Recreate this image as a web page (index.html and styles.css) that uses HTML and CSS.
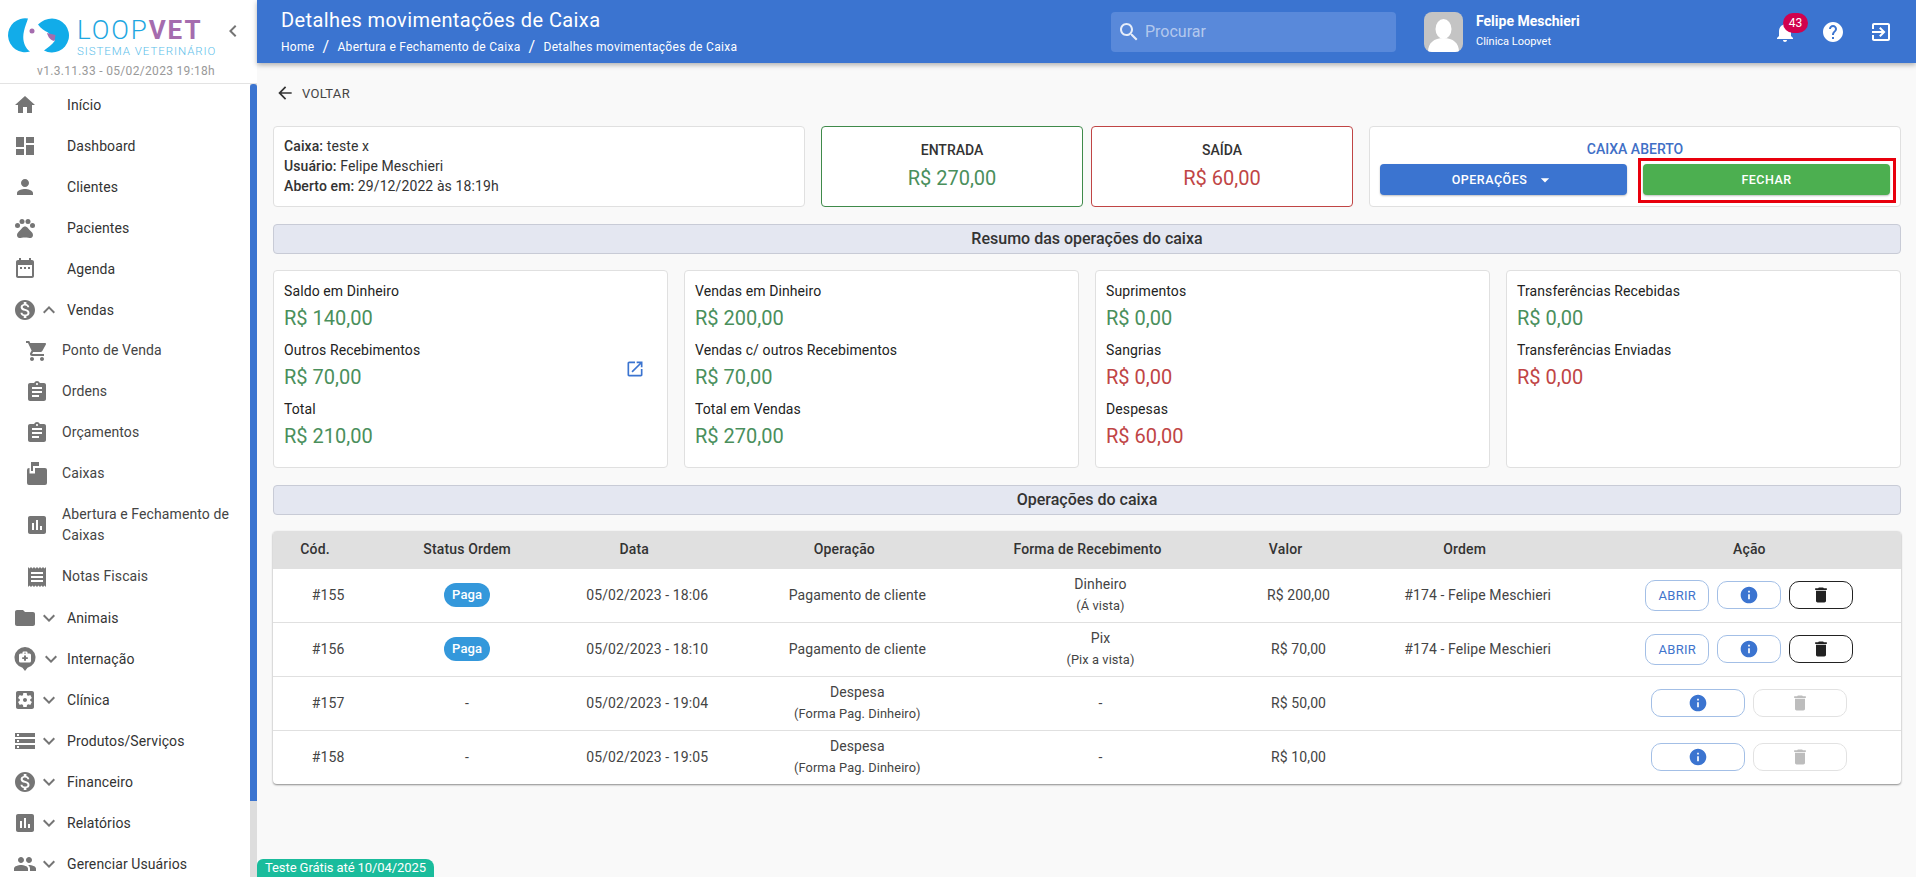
FILE: index.html
```html
<!DOCTYPE html>
<html lang="pt-BR">
<head>
  <meta charset="utf-8">
  <title>Detalhes movimentações de Caixa</title>
  <link rel="stylesheet" href="styles.css">
</head>
<body>
  <!-- icon sprite -->
  <svg class="sprite" aria-hidden="true">
    <symbol id="i-home" viewBox="0 0 24 24"><path d="M10 20v-6h4v6h5v-8h3L12 3 2 12h3v8z"/></symbol>
    <symbol id="i-dashboard" viewBox="0 0 24 24"><path d="M3 13h8V3H3v10zm0 8h8v-6H3v6zm10 0h8V11h-8v10zm0-18v6h8V3h-8z"/></symbol>
    <symbol id="i-person" viewBox="0 0 24 24"><path d="M12 12c2.21 0 4-1.79 4-4s-1.79-4-4-4-4 1.79-4 4 1.79 4 4 4zm0 2c-2.67 0-8 1.34-8 4v2h16v-2c0-2.66-5.33-4-8-4z"/></symbol>
    <symbol id="i-pets" viewBox="0 0 24 24"><circle cx="4.5" cy="9.5" r="2.5"/><circle cx="9" cy="5.5" r="2.5"/><circle cx="15" cy="5.5" r="2.5"/><circle cx="19.5" cy="9.5" r="2.5"/><path d="M17.34 14.86c-.87-1.02-1.6-1.89-2.48-2.91-.46-.54-1.05-1.08-1.75-1.32-.11-.04-.22-.07-.33-.09-.25-.04-.52-.04-.78-.04s-.53 0-.79.05c-.11.02-.22.05-.33.09-.7.24-1.28.78-1.75 1.32-.87 1.02-1.6 1.89-2.48 2.91-1.31 1.31-2.92 2.76-2.62 4.79.29 1.02 1.02 2.03 2.33 2.32.73.15 3.06-.44 5.54-.44h.18c2.48 0 4.81.58 5.54.44 1.31-.29 2.04-1.31 2.33-2.32.31-2.04-1.3-3.49-2.61-4.8z"/></symbol>
    <symbol id="i-event" viewBox="0 0 24 24"><path d="M19 3h-1V1h-2v2H8V1H6v2H5c-1.11 0-1.99.9-1.99 2L3 19c0 1.1.89 2 2 2h14c1.1 0 2-.9 2-2V5c0-1.1-.9-2-2-2zm0 16H5V8h14v11zM7 10h2v2H7zm4 0h2v2h-2zm4 0h2v2h-2z"/></symbol>
    <symbol id="i-money" viewBox="0 0 24 24"><path d="M12 2C6.48 2 2 6.48 2 12s4.48 10 10 10 10-4.48 10-10S17.52 2 12 2zm1.41 16.09V20h-2.67v-1.93c-1.71-.36-3.16-1.46-3.27-3.4h1.96c.1 1.05.82 1.87 2.65 1.87 1.96 0 2.4-.98 2.4-1.59 0-.83-.44-1.61-2.67-2.14-2.48-.6-4.18-1.62-4.18-3.67 0-1.72 1.39-2.84 3.11-3.21V4h2.67v1.95c1.86.45 2.79 1.86 2.85 3.39H14.3c-.05-1.11-.64-1.87-2.22-1.87-1.5 0-2.4.68-2.4 1.64 0 .84.65 1.39 2.67 1.91s4.18 1.39 4.18 3.91c-.01 1.83-1.38 2.83-3.12 3.16z"/></symbol>
    <symbol id="i-cart" viewBox="0 0 24 24"><path d="M7 18c-1.1 0-1.99.9-1.99 2S5.9 22 7 22s2-.9 2-2-.9-2-2-2zM1 2v2h2l3.6 7.59-1.35 2.45c-.16.28-.25.61-.25.96 0 1.1.9 2 2 2h12v-2H7.42c-.14 0-.25-.11-.25-.25l.03-.12.9-1.63h7.45c.75 0 1.41-.41 1.75-1.03l3.58-6.49c.08-.14.12-.31.12-.48 0-.55-.45-1-1-1H5.21l-.94-2H1zm16 16c-1.1 0-1.99.9-1.99 2s.89 2 1.99 2 2-.9 2-2-.9-2-2-2z"/></symbol>
    <symbol id="i-assignment" viewBox="0 0 24 24"><path d="M19 3h-4.18C14.4 1.84 13.3 1 12 1c-1.3 0-2.4.84-2.82 2H5c-1.1 0-2 .9-2 2v14c0 1.1.9 2 2 2h14c1.1 0 2-.9 2-2V5c0-1.1-.9-2-2-2zm-7 0c.55 0 1 .45 1 1s-.45 1-1 1-1-.45-1-1 .45-1 1-1zm2 14H7v-2h7v2zm3-4H7v-2h10v2zm0-4H7V7h10v2z"/></symbol>
    <symbol id="i-caixa" viewBox="0 0 24 24"><path d="M6 0h8v4H8v5H6zM4 6h.5v5.5H10V6h10a2 2 0 0 1 2 2v13a2 2 0 0 1-2 2H4a2 2 0 0 1-2-2V8a2 2 0 0 1 2-2z"/></symbol>
    <symbol id="i-assessment" viewBox="0 0 24 24"><path d="M19 3H5c-1.1 0-2 .9-2 2v14c0 1.1.9 2 2 2h14c1.1 0 2-.9 2-2V5c0-1.1-.9-2-2-2zM9 17H7v-7h2v7zm4 0h-2V7h2v10zm4 0h-2v-4h2v4z"/></symbol>
    <symbol id="i-receipt" viewBox="0 0 24 24"><path d="M21 2l-1.5 1.5L18 2l-1.5 1.5L15 2l-1.5 1.5L12 2l-1.5 1.5L9 2 7.5 3.5 6 2 4.5 3.5 3 2v20l1.5-1.5L6 22l1.5-1.5L9 22l1.5-1.5L12 22l1.5-1.5L15 22l1.5-1.5L18 22l1.5-1.5L21 22V2zM18 17H6v-2h12v2zm0-4H6v-2h12v2zm0-4H6V7h12v2z"/></symbol>
    <symbol id="i-folder" viewBox="0 0 24 24"><path d="M10 4H4c-1.1 0-1.99.9-1.99 2L2 18c0 1.1.9 2 2 2h16c1.1 0 2-.9 2-2V8c0-1.1-.9-2-2-2h-8l-2-2z"/></symbol>
    <symbol id="i-internacao" viewBox="0 0 24 24"><path fill-rule="evenodd" d="M12 0a10.5 10.5 0 0 1 2.5 20.7L12 24l-2.5-3.3A10.5 10.5 0 0 1 12 0zM9.5 6.500v-1a1 1 0 0 1 1-1h3a1 1 0 0 1 1 1v1h2a1.5 1.5 0 0 1 1.5 1.5v6a1.5 1.5 0 0 1-1.5 1.5h-9A1.5 1.5 0 0 1 6 14V8a1.5 1.5 0 0 1 1.5-1.5zM11 6.500h2v-.7h-2zM11 8.500v1.800H9.2v1.600H11v1.800h2v-1.800h1.800v-1.600H13V8.500z"/></symbol>
    <symbol id="i-clinica" viewBox="0 0 24 24"><path d="M12 10c-1.1 0-2 .9-2 2s.9 2 2 2 2-.9 2-2-.9-2-2-2zm7-7H5c-1.11 0-2 .9-2 2v14c0 1.1.89 2 2 2h14c1.11 0 2-.9 2-2V5c0-1.1-.89-2-2-2zm-1.75 9c0 .23-.02.46-.05.68l1.48 1.16c.13.11.17.3.08.45l-1.4 2.42c-.09.15-.27.21-.43.15l-1.74-.7c-.36.28-.76.51-1.18.69l-.26 1.85c-.03.17-.18.3-.35.3h-2.8c-.17 0-.32-.13-.35-.29l-.26-1.85c-.43-.18-.82-.41-1.18-.69l-1.74.7c-.16.06-.34 0-.43-.15l-1.4-2.42c-.09-.15-.05-.34.08-.45l1.48-1.16c-.03-.23-.05-.46-.05-.69 0-.23.02-.46.05-.68l-1.48-1.16c-.13-.11-.17-.3-.08-.45l1.4-2.42c.09-.15.27-.21.43-.15l1.74.7c.36-.28.76-.51 1.18-.69l.26-1.85c.03-.17.18-.3.35-.3h2.8c.17 0 .32.13.35.29l.26 1.85c.43.18.82.41 1.18.69l1.74-.7c.16-.06.34 0 .43.15l1.4 2.42c.09.15.05.34-.08.45l-1.48 1.16c.03.23.05.46.05.69z"/></symbol>
    <symbol id="i-storage" viewBox="0 0 24 24"><path d="M2 20h20v-4H2v4zm2-3h2v2H4v-2zM2 4v4h20V4H2zm4 3H4V5h2v2zm-4 7h20v-4H2v4zm2-3h2v2H4v-2z"/></symbol>
    <symbol id="i-group" viewBox="0 0 24 24"><path d="M16 11c1.66 0 2.99-1.34 2.99-3S17.66 5 16 5c-1.66 0-3 1.34-3 3s1.34 3 3 3zm-8 0c1.66 0 2.99-1.34 2.99-3S9.66 5 8 5C6.34 5 5 6.34 5 8s1.34 3 3 3zm0 2c-2.33 0-7 1.17-7 3.5V19h14v-2.5c0-2.33-4.67-3.5-7-3.5zm8 0c-.29 0-.62.02-.97.05 1.16.84 1.97 1.97 1.97 3.45V19h6v-2.5c0-2.33-4.67-3.5-7-3.5z"/></symbol>
    <symbol id="i-more" viewBox="0 0 24 24"><path d="M16.59 8.59L12 13.17 7.41 8.59 6 10l6 6 6-6z"/></symbol>
    <symbol id="i-less" viewBox="0 0 24 24"><path d="M12 8l-6 6 1.41 1.41L12 10.83l4.59 4.58L18 14z"/></symbol>
    <symbol id="i-left" viewBox="0 0 24 24"><path d="M15.41 7.41L14 6l-6 6 6 6 1.41-1.41L10.83 12z"/></symbol>
    <symbol id="i-back" viewBox="0 0 24 24"><path d="M20 11H7.83l5.59-5.59L12 4l-8 8 8 8 1.41-1.41L7.83 13H20v-2z"/></symbol>
    <symbol id="i-search" viewBox="0 0 24 24"><path d="M15.5 14h-.79l-.28-.27C15.41 12.59 16 11.11 16 9.5 16 5.91 13.09 3 9.5 3S3 5.91 3 9.5 5.91 16 9.5 16c1.61 0 3.09-.59 4.23-1.57l.27.28v.79l5 4.99L20.49 19l-4.99-5zm-6 0C7.01 14 5 11.99 5 9.5S7.01 5 9.5 5 14 7.01 14 9.5 11.99 14 9.5 14z"/></symbol>
    <symbol id="i-bell" viewBox="0 0 24 24"><path d="M12 22c1.1 0 2-.9 2-2h-4c0 1.1.89 2 2 2zm6-6v-5c0-3.07-1.64-5.64-4.5-6.32V4c0-.83-.67-1.5-1.5-1.5s-1.5.67-1.5 1.5v.68C7.63 5.36 6 7.92 6 11v5l-2 2v1h16v-1l-2-2z"/></symbol>
    <symbol id="i-help" viewBox="0 0 24 24"><path d="M12 2C6.48 2 2 6.48 2 12s4.48 10 10 10 10-4.48 10-10S17.52 2 12 2zm1 17h-2v-2h2v2zm2.07-7.75l-.9.92C13.45 12.9 13 13.5 13 15h-2v-.5c0-1.1.45-2.1 1.17-2.83l1.24-1.26c.37-.36.59-.86.59-1.41 0-1.1-.9-2-2-2s-2 .9-2 2H8c0-2.21 1.79-4 4-4s4 1.79 4 4c0 .88-.36 1.68-.93 2.25z"/></symbol>
    <symbol id="i-exit" viewBox="0 0 24 24"><path d="M10.09 15.59L11.5 17l5-5-5-5-1.41 1.41L12.67 11H3v2h9.67l-2.58 2.59zM19 3H5c-1.11 0-2 .9-2 2v4h2V5h14v14H5v-4H3v4c0 1.1.89 2 2 2h14c1.1 0 2-.9 2-2V5c0-1.1-.9-2-2-2z"/></symbol>
    <symbol id="i-info" viewBox="0 0 24 24"><path d="M12 2C6.48 2 2 6.48 2 12s4.48 10 10 10 10-4.48 10-10S17.52 2 12 2zm1 15h-2v-6h2v6zm0-8h-2V7h2v2z"/></symbol>
    <symbol id="i-delete" viewBox="0 0 24 24"><path d="M6 19c0 1.1.9 2 2 2h8c1.1 0 2-.9 2-2V7H6v12zM19 4h-3.5l-1-1h-5l-1 1H5v2h14V4z"/></symbol>
    <symbol id="i-open" viewBox="0 0 24 24"><path d="M19 19H5V5h7V3H5c-1.11 0-2 .9-2 2v14c0 1.1.89 2 2 2h14c1.1 0 2-.9 2-2v-7h-2v7zM14 3v2h3.59l-9.83 9.83 1.41 1.41L19 6.41V10h2V3h-7z"/></symbol>
    <symbol id="i-drop" viewBox="0 0 24 24"><path d="M7 10l5 5 5-5z"/></symbol>
  </svg>

  <div class="app">
    <aside class="sidebar">
      <div class="brand">
        <div class="brand-row">
          <svg class="brand-mark" viewBox="0 0 64 36">
            <path fill="#12ace9" d="M21 .5A17 17 0 1 0 23 33.5C17 29 15 21 17 13C18 8 20 4 21 .5Z"/>
            <path fill="#12ace9" d="M31 6.500C35 2.500 40 .5 45 .5A17 17 0 1 1 37 32.5C41 29.5 45 27 48 22.5L41 14.5C37 12.5 34 10.5 31 6.500Z"/>
            <path fill="#a56cae" d="M40 15L48.5 17L47.5 23C44 22.5 41 19.5 40 15Z"/>
            <circle cx="25" cy="13" r="2.5" fill="#a56cae"/>
          </svg>
          <div class="brand-text">
            <div class="brand-name"><span class="brand-loop">LOOP</span><span class="brand-vet">VET</span></div>
            <div class="brand-sub">SISTEMA VETERINÁRIO</div>
          </div>
          <svg class="icon brand-toggle"><use href="#i-left"/></svg>
        </div>
        <div class="version">v1.3.11.33 - 05/02/2023 19:18h</div>
      </div>

      <div class="nav-wrap">
        <nav class="nav">
          <a class="nav-item"><svg class="icon nav-icon"><use href="#i-home"/></svg><span class="nav-label">Início</span></a>
          <a class="nav-item"><svg class="icon nav-icon"><use href="#i-dashboard"/></svg><span class="nav-label">Dashboard</span></a>
          <a class="nav-item"><svg class="icon nav-icon"><use href="#i-person"/></svg><span class="nav-label">Clientes</span></a>
          <a class="nav-item"><svg class="icon nav-icon"><use href="#i-pets"/></svg><span class="nav-label">Pacientes</span></a>
          <a class="nav-item"><svg class="icon nav-icon"><use href="#i-event"/></svg><span class="nav-label">Agenda</span></a>
          <a class="nav-item has-arrow"><svg class="icon nav-icon"><use href="#i-money"/></svg><svg class="icon nav-arrow"><use href="#i-less"/></svg><span class="nav-label">Vendas</span></a>
          <a class="nav-item sub"><svg class="icon nav-icon"><use href="#i-cart"/></svg><span class="nav-label">Ponto de Venda</span></a>
          <a class="nav-item sub"><svg class="icon nav-icon"><use href="#i-assignment"/></svg><span class="nav-label">Ordens</span></a>
          <a class="nav-item sub"><svg class="icon nav-icon"><use href="#i-assignment"/></svg><span class="nav-label">Orçamentos</span></a>
          <a class="nav-item sub"><svg class="icon nav-icon"><use href="#i-caixa"/></svg><span class="nav-label">Caixas</span></a>
          <a class="nav-item sub tall"><svg class="icon nav-icon"><use href="#i-assessment"/></svg><span class="nav-label">Abertura e Fechamento de Caixas</span></a>
          <a class="nav-item sub"><svg class="icon nav-icon"><use href="#i-receipt"/></svg><span class="nav-label">Notas Fiscais</span></a>
          <a class="nav-item has-arrow"><svg class="icon nav-icon"><use href="#i-folder"/></svg><svg class="icon nav-arrow"><use href="#i-more"/></svg><span class="nav-label">Animais</span></a>
          <a class="nav-item has-arrow arrow-far"><svg class="icon nav-icon"><use href="#i-internacao"/></svg><svg class="icon nav-arrow"><use href="#i-more"/></svg><span class="nav-label">Internação</span></a>
          <a class="nav-item has-arrow"><svg class="icon nav-icon"><use href="#i-clinica"/></svg><svg class="icon nav-arrow"><use href="#i-more"/></svg><span class="nav-label">Clínica</span></a>
          <a class="nav-item has-arrow"><svg class="icon nav-icon"><use href="#i-storage"/></svg><svg class="icon nav-arrow"><use href="#i-more"/></svg><span class="nav-label">Produtos/Serviços</span></a>
          <a class="nav-item has-arrow"><svg class="icon nav-icon"><use href="#i-money"/></svg><svg class="icon nav-arrow"><use href="#i-more"/></svg><span class="nav-label">Financeiro</span></a>
          <a class="nav-item has-arrow"><svg class="icon nav-icon"><use href="#i-assessment"/></svg><svg class="icon nav-arrow"><use href="#i-more"/></svg><span class="nav-label">Relatórios</span></a>
          <a class="nav-item has-arrow"><svg class="icon nav-icon"><use href="#i-group"/></svg><svg class="icon nav-arrow"><use href="#i-more"/></svg><span class="nav-label">Gerenciar Usuários</span></a>
        </nav>
        <div class="rail"><div class="rail-thumb"></div></div>
      </div>
    </aside>

    <div class="main">
      <header class="topbar">
        <div class="page-head">
          <h1 class="page-title">Detalhes movimentações de Caixa</h1>
          <div class="crumbs"><span>Home</span><i>/</i><span>Abertura e Fechamento de Caixa</span><i>/</i><span>Detalhes movimentações de Caixa</span></div>
        </div>
        <div class="search"><svg class="icon search-icon"><use href="#i-search"/></svg><span>Procurar</span></div>
        <div class="user">
          <div class="avatar">
            <svg viewBox="0 0 39 40"><rect width="39" height="40" fill="#c4c4c4"/><ellipse cx="19.5" cy="17" rx="8" ry="10" fill="#fff"/><path fill="#fff" d="M4 40c0-9 6-14 15.5-14S35 31 35 40z"/></svg>
          </div>
          <div class="user-text">
            <div class="user-name">Felipe Meschieri</div>
            <div class="user-org">Clínica Loopvet</div>
          </div>
        </div>
        <div class="top-actions">
          <div class="bell"><svg class="icon"><use href="#i-bell"/></svg><span class="badge">43</span></div>
          <svg class="icon"><use href="#i-help"/></svg>
          <svg class="icon"><use href="#i-exit"/></svg>
        </div>
      </header>

      <main class="content">
        <a class="back"><svg class="icon"><use href="#i-back"/></svg>VOLTAR</a>

        <div class="summary">
          <div class="card info-card">
            <div><b>Caixa:</b> teste x</div>
            <div><b>Usuário:</b> Felipe Meschieri</div>
            <div><b>Aberto em:</b> 29/12/2022 às 18:19h</div>
          </div>
          <div class="totals">
            <div class="card total in"><div class="total-label">ENTRADA</div><div class="money green">R$ 270,00</div></div>
            <div class="card total out"><div class="total-label">SAÍDA</div><div class="money red">R$ 60,00</div></div>
          </div>
          <div class="card status-card">
            <div class="status-title">CAIXA ABERTO</div>
            <div class="status-btns">
              <button class="btn btn-blue">OPERAÇÕES <svg class="icon"><use href="#i-drop"/></svg></button>
              <div class="marked"><button class="btn btn-green">FECHAR</button></div>
            </div>
          </div>
        </div>

        <div class="bar">Resumo das operações do caixa</div>

        <div class="stats">
          <div class="card stat">
            <div>
              <div class="stat-label">Saldo em Dinheiro</div><div class="money green">R$ 140,00</div>
              <div class="stat-label">Outros Recebimentos</div><div class="money green">R$ 70,00</div>
              <div class="stat-label">Total</div><div class="money green">R$ 210,00</div>
            </div>
            <svg class="icon stat-link"><use href="#i-open"/></svg>
          </div>
          <div class="card stat">
            <div>
              <div class="stat-label">Vendas em Dinheiro</div><div class="money green">R$ 200,00</div>
              <div class="stat-label">Vendas c/ outros Recebimentos</div><div class="money green">R$ 70,00</div>
              <div class="stat-label">Total em Vendas</div><div class="money green">R$ 270,00</div>
            </div>
          </div>
          <div class="card stat">
            <div>
              <div class="stat-label">Suprimentos</div><div class="money green">R$ 0,00</div>
              <div class="stat-label">Sangrias</div><div class="money red">R$ 0,00</div>
              <div class="stat-label">Despesas</div><div class="money red">R$ 60,00</div>
            </div>
          </div>
          <div class="card stat">
            <div>
              <div class="stat-label">Transferências Recebidas</div><div class="money green">R$ 0,00</div>
              <div class="stat-label">Transferências Enviadas</div><div class="money red">R$ 0,00</div>
            </div>
          </div>
        </div>

        <div class="bar">Operações do caixa</div>

        <div class="table-card">
          <table class="ops">
            <colgroup>
              <col class="c-cod"><col class="c-status"><col class="c-data"><col class="c-op">
              <col class="c-forma"><col class="c-valor"><col class="c-ordem"><col class="c-acao">
            </colgroup>
            <thead>
              <tr>
                <th><span class="sort">Cód.</span></th>
                <th>Status Ordem</th>
                <th><span class="sort">Data</span></th>
                <th><span class="sort">Operação</span></th>
                <th><span class="sort">Forma de Recebimento</span></th>
                <th><span class="sort">Valor</span></th>
                <th><span class="sort">Ordem</span></th>
                <th class="acao-head">Ação</th>
              </tr>
            </thead>
            <tbody>
              <tr>
                <td>#155</td>
                <td><span class="chip">Paga</span></td>
                <td>05/02/2023 - 18:06</td>
                <td>Pagamento de cliente</td>
                <td>Dinheiro<small>(Á vista)</small></td>
                <td>R$ 200,00</td>
                <td>#174 - Felipe Meschieri</td>
                <td><div class="acts">
                  <button class="act act-open">ABRIR</button>
                  <button class="act act-info"><svg class="icon"><use href="#i-info"/></svg></button>
                  <button class="act act-del"><svg class="icon"><use href="#i-delete"/></svg></button>
                </div></td>
              </tr>
              <tr>
                <td>#156</td>
                <td><span class="chip">Paga</span></td>
                <td>05/02/2023 - 18:10</td>
                <td>Pagamento de cliente</td>
                <td>Pix<small>(Pix a vista)</small></td>
                <td>R$ 70,00</td>
                <td>#174 - Felipe Meschieri</td>
                <td><div class="acts">
                  <button class="act act-open">ABRIR</button>
                  <button class="act act-info"><svg class="icon"><use href="#i-info"/></svg></button>
                  <button class="act act-del"><svg class="icon"><use href="#i-delete"/></svg></button>
                </div></td>
              </tr>
              <tr>
                <td>#157</td>
                <td>-</td>
                <td>05/02/2023 - 19:04</td>
                <td>Despesa<small>(Forma Pag. Dinheiro)</small></td>
                <td>-</td>
                <td>R$ 50,00</td>
                <td></td>
                <td><div class="acts">
                  <button class="act act-info wide"><svg class="icon"><use href="#i-info"/></svg></button>
                  <button class="act act-off wide"><svg class="icon"><use href="#i-delete"/></svg></button>
                </div></td>
              </tr>
              <tr>
                <td>#158</td>
                <td>-</td>
                <td>05/02/2023 - 19:05</td>
                <td>Despesa<small>(Forma Pag. Dinheiro)</small></td>
                <td>-</td>
                <td>R$ 10,00</td>
                <td></td>
                <td><div class="acts">
                  <button class="act act-info wide"><svg class="icon"><use href="#i-info"/></svg></button>
                  <button class="act act-off wide"><svg class="icon"><use href="#i-delete"/></svg></button>
                </div></td>
              </tr>
            </tbody>
          </table>
        </div>
      </main>

      <div class="trial">Teste Grátis até 10/04/2025</div>
    </div>
  </div>
</body>
</html>
```

FILE: styles.css
```css
* { box-sizing: border-box; }
html, body { height: 100%; margin: 0; overflow: hidden; }
body { font-family: Roboto, "Liberation Sans", sans-serif; font-size: 14px; color: #333; background: #f9f9f9; }

.sprite { position: absolute; width: 0; height: 0; }
.icon { width: 24px; height: 24px; fill: currentColor; flex: none; display: block; }

.app { display: flex; height: 877px; }

/* sidebar */
.sidebar { width: 257px; flex: none; display: flex; flex-direction: column; background: #fff; height: 100%; overflow: hidden; }
.brand { height: 84px; flex: none; border-bottom: 1px solid #e3e3e3; padding-top: 18px; }
.brand-row { display: flex; align-items: flex-start; padding-left: 7px; }
.brand-mark { width: 64px; height: 36px; flex: none; }
.brand-text { margin-left: 6px; width: 124px; }
.brand-name { font-size: 26px; line-height: 24px; letter-spacing: 1.9px; white-space: nowrap; }
.brand-loop { color: #1ea7e1; font-weight: 300; }
.brand-vet { color: #a56cae; font-weight: 700; }
.brand-sub { font-size: 11.5px; line-height: 14px; margin-top: 2px; letter-spacing: .95px; color: #5cc0ea; font-weight: 300; white-space: nowrap; }
.brand-toggle { color: #757575; margin: 1px 0 0 20px; }
.version { margin-top: 5px; padding-left: 37px; font-size: 12px; line-height: 16px; letter-spacing: .32px; color: #999; white-space: nowrap; }

.nav-wrap { flex: 1; display: flex; min-height: 0; }
.nav { width: 250px; flex: none; }
.nav-item { display: flex; align-items: center; height: 41px; padding-left: 13px; color: #333; letter-spacing: .1px; }
.nav-icon { color: #757575; }
.nav-label { margin-left: 30px; }
.nav-arrow { color: #757575; }
.has-arrow .nav-label { margin-left: 6px; }
.arrow-far .nav-arrow { margin: 0 -2px 0 2px; }
.nav-item.sub { padding-left: 25px; }
.sub .nav-label { margin-left: 13px; line-height: 21px; color: #444; }
.nav-item.tall { height: 62px; }
.rail { width: 7px; background: #ddd; }
.rail-thumb { height: 717px; background: #3b74d0; border-radius: 3px 3px 0 0; }

/* main area */
.main { flex: 1; min-width: 0; display: flex; flex-direction: column; position: relative; }

.topbar { height: 63px; flex: none; display: flex; align-items: center; background: #3b74d0; color: #fff; padding-left: 24px; box-shadow: 0 2px 5px rgba(0,0,0,.3); position: relative; }
.page-head { width: 830px; flex: none; }
.page-title { margin: 0; font-size: 20px; font-weight: 400; line-height: 24px; letter-spacing: .4px; }
.crumbs { display: flex; align-items: center; margin-top: 6px; font-size: 12px; line-height: 18px; letter-spacing: .31px; }
.crumbs i { font-style: normal; font-size: 16px; margin: 0 8px; }

.search { width: 285px; height: 40px; flex: none; display: flex; align-items: center; gap: 4px; padding-left: 6px; background: #5989da; border-radius: 4px; color: rgba(255,255,255,.55); font-size: 16px; }
.search-icon { color: #fff; opacity: .85; }
.user { display: flex; align-items: center; margin-left: 28px; width: 349px; flex: none; }
.avatar { width: 39px; height: 40px; border-radius: 8px; overflow: hidden; flex: none; }
.avatar svg { display: block; width: 39px; height: 40px; }
.user-text { margin-left: 13px; margin-top: -2px; }
.user-name { font-size: 14px; font-weight: 700; line-height: 18px; }
.user-org { font-size: 11px; line-height: 14px; margin-top: 5px; }
.top-actions { display: flex; gap: 24px; align-items: center; }
.bell { position: relative; }
.badge { position: absolute; left: 10px; top: -7px; width: 25px; height: 20px; border-radius: 10px; background: #d1024e; font-size: 12px; line-height: 20px; text-align: center; }

.content { flex: 1; padding: 12px 15px 0 16px; min-height: 0; }
.back { display: flex; align-items: center; height: 36px; font-size: 13px; letter-spacing: .3px; color: #444; padding-left: 2px; }
.back .icon { width: 20px; height: 20px; margin-right: 7px; color: #333; }

.card { background: #fff; border: 1px solid #e0e0e0; border-radius: 4px; }
.money { font-size: 20px; line-height: 34px; }
.green { color: #4a8f5c; }
.red { color: #c04545; }

.summary { display: grid; grid-template-columns: repeat(3, 1fr); gap: 16px; margin-top: 15px; height: 81px; }
.info-card { padding: 9px 10px; line-height: 20px; letter-spacing: .1px; }
.info-card b { font-weight: 500; }
.totals { display: grid; grid-template-columns: 1fr 1fr; gap: 8px; }
.total { text-align: center; padding-top: 13px; }
.total .money { margin-top: 1px; }
.total.in { border-color: #3f8a4a; }
.total.out { border-color: #c04545; }
.total-label { font-weight: 500; line-height: 20px; }
.status-card { padding: 12px 10px 0; }
.status-title { color: #3f6fc6; font-weight: 500; text-align: center; line-height: 20px; }
.status-btns { display: grid; grid-template-columns: 1fr 1fr; gap: 16px; margin-top: 5px; }
.btn { height: 31px; width: 100%; border: 0; border-radius: 4px; color: #fff; font: 500 12.5px Roboto, sans-serif; letter-spacing: .5px; display: flex; align-items: center; justify-content: center; box-shadow: 0 1px 2px rgba(0,0,0,.25); }
.btn .icon { width: 20px; height: 20px; margin-left: 8px; }
.btn-blue { background: #3b74d0; }
.btn-green { background: #4caf50; }
.marked { position: relative; }
.marked::after { content: ""; position: absolute; top: -6px; right: -6px; bottom: -8px; left: -5px; border: 3px solid #e8000d; }

.bar { height: 30px; margin-top: 17px; background: #e4e7f1; border: 1px solid #c8cbd6; border-radius: 4px; text-align: center; font-size: 16px; font-weight: 500; line-height: 28px; color: #333; }

.stats { display: grid; grid-template-columns: repeat(4, 1fr); gap: 16px; margin-top: 16px; height: 198px; }
.stat { display: flex; align-items: center; justify-content: space-between; padding: 0 22px 0 10px; }
.stat > div { align-self: flex-start; padding-top: 10px; }
.stat-label { line-height: 20px; color: #222; letter-spacing: .1px; }
.stat .money { margin-bottom: 5px; }
.stat-link { color: #3b74d0; width: 20px; height: 20px; }

.table-card { margin-top: 16px; background: #fff; border-radius: 4px; box-shadow: 0 1px 2px rgba(0,0,0,.45); overflow: hidden; }
.ops { width: 100%; border-collapse: collapse; table-layout: fixed; }
.c-cod { width: 110px; } .c-status { width: 168px; } .c-data { width: 192px; } .c-op { width: 228px; }
.c-forma { width: 258px; } .c-valor { width: 138px; } .c-ordem { width: 220px; } .c-acao { width: 313px; }
.ops th { height: 37px; padding: 0 0 1px; background: #e0e0e0; font-weight: 500; color: #333; text-align: center; letter-spacing: .15px; }
.ops th .sort { margin-right: 26px; }
.ops th.acao-head { padding-left: 10px; }
.ops td { height: 54px; padding: 0; text-align: center; border-top: 1px solid #e0e0e0; line-height: 21px; color: #444; letter-spacing: .1px; }
.ops small { display: block; font-size: 12.8px; }
.chip { display: inline-block; height: 24px; width: 46px; border-radius: 12px; background: #3498db; color: #fff; font-size: 13px; font-weight: 500; line-height: 24px; }
.acts { display: flex; justify-content: center; align-items: center; gap: 8px; padding-left: 10px; }
.act { width: 64px; height: 28px; background: #fff; border: 1px solid #a3bfe6; border-radius: 10px; padding: 0; display: flex; align-items: center; justify-content: center; }
.act .icon { width: 20px; height: 20px; }
.act-open { height: 31px; color: #3f74cc; font: 400 13px Roboto, sans-serif; letter-spacing: .3px; }
.act-info { color: #3b74d0; }
.act-del { border-color: #222; color: #222; }
.act-off { border-color: #e2e2e2; color: #bdbdbd; }
.act.wide { width: 94px; }

.trial { position: absolute; left: 0; bottom: 0; height: 18px; padding: 0 8px; background: #1abc9c; color: #fff; font-size: 13px; line-height: 18px; letter-spacing: -.08px; border-radius: 6px 8px 0 0; white-space: nowrap; }
```
